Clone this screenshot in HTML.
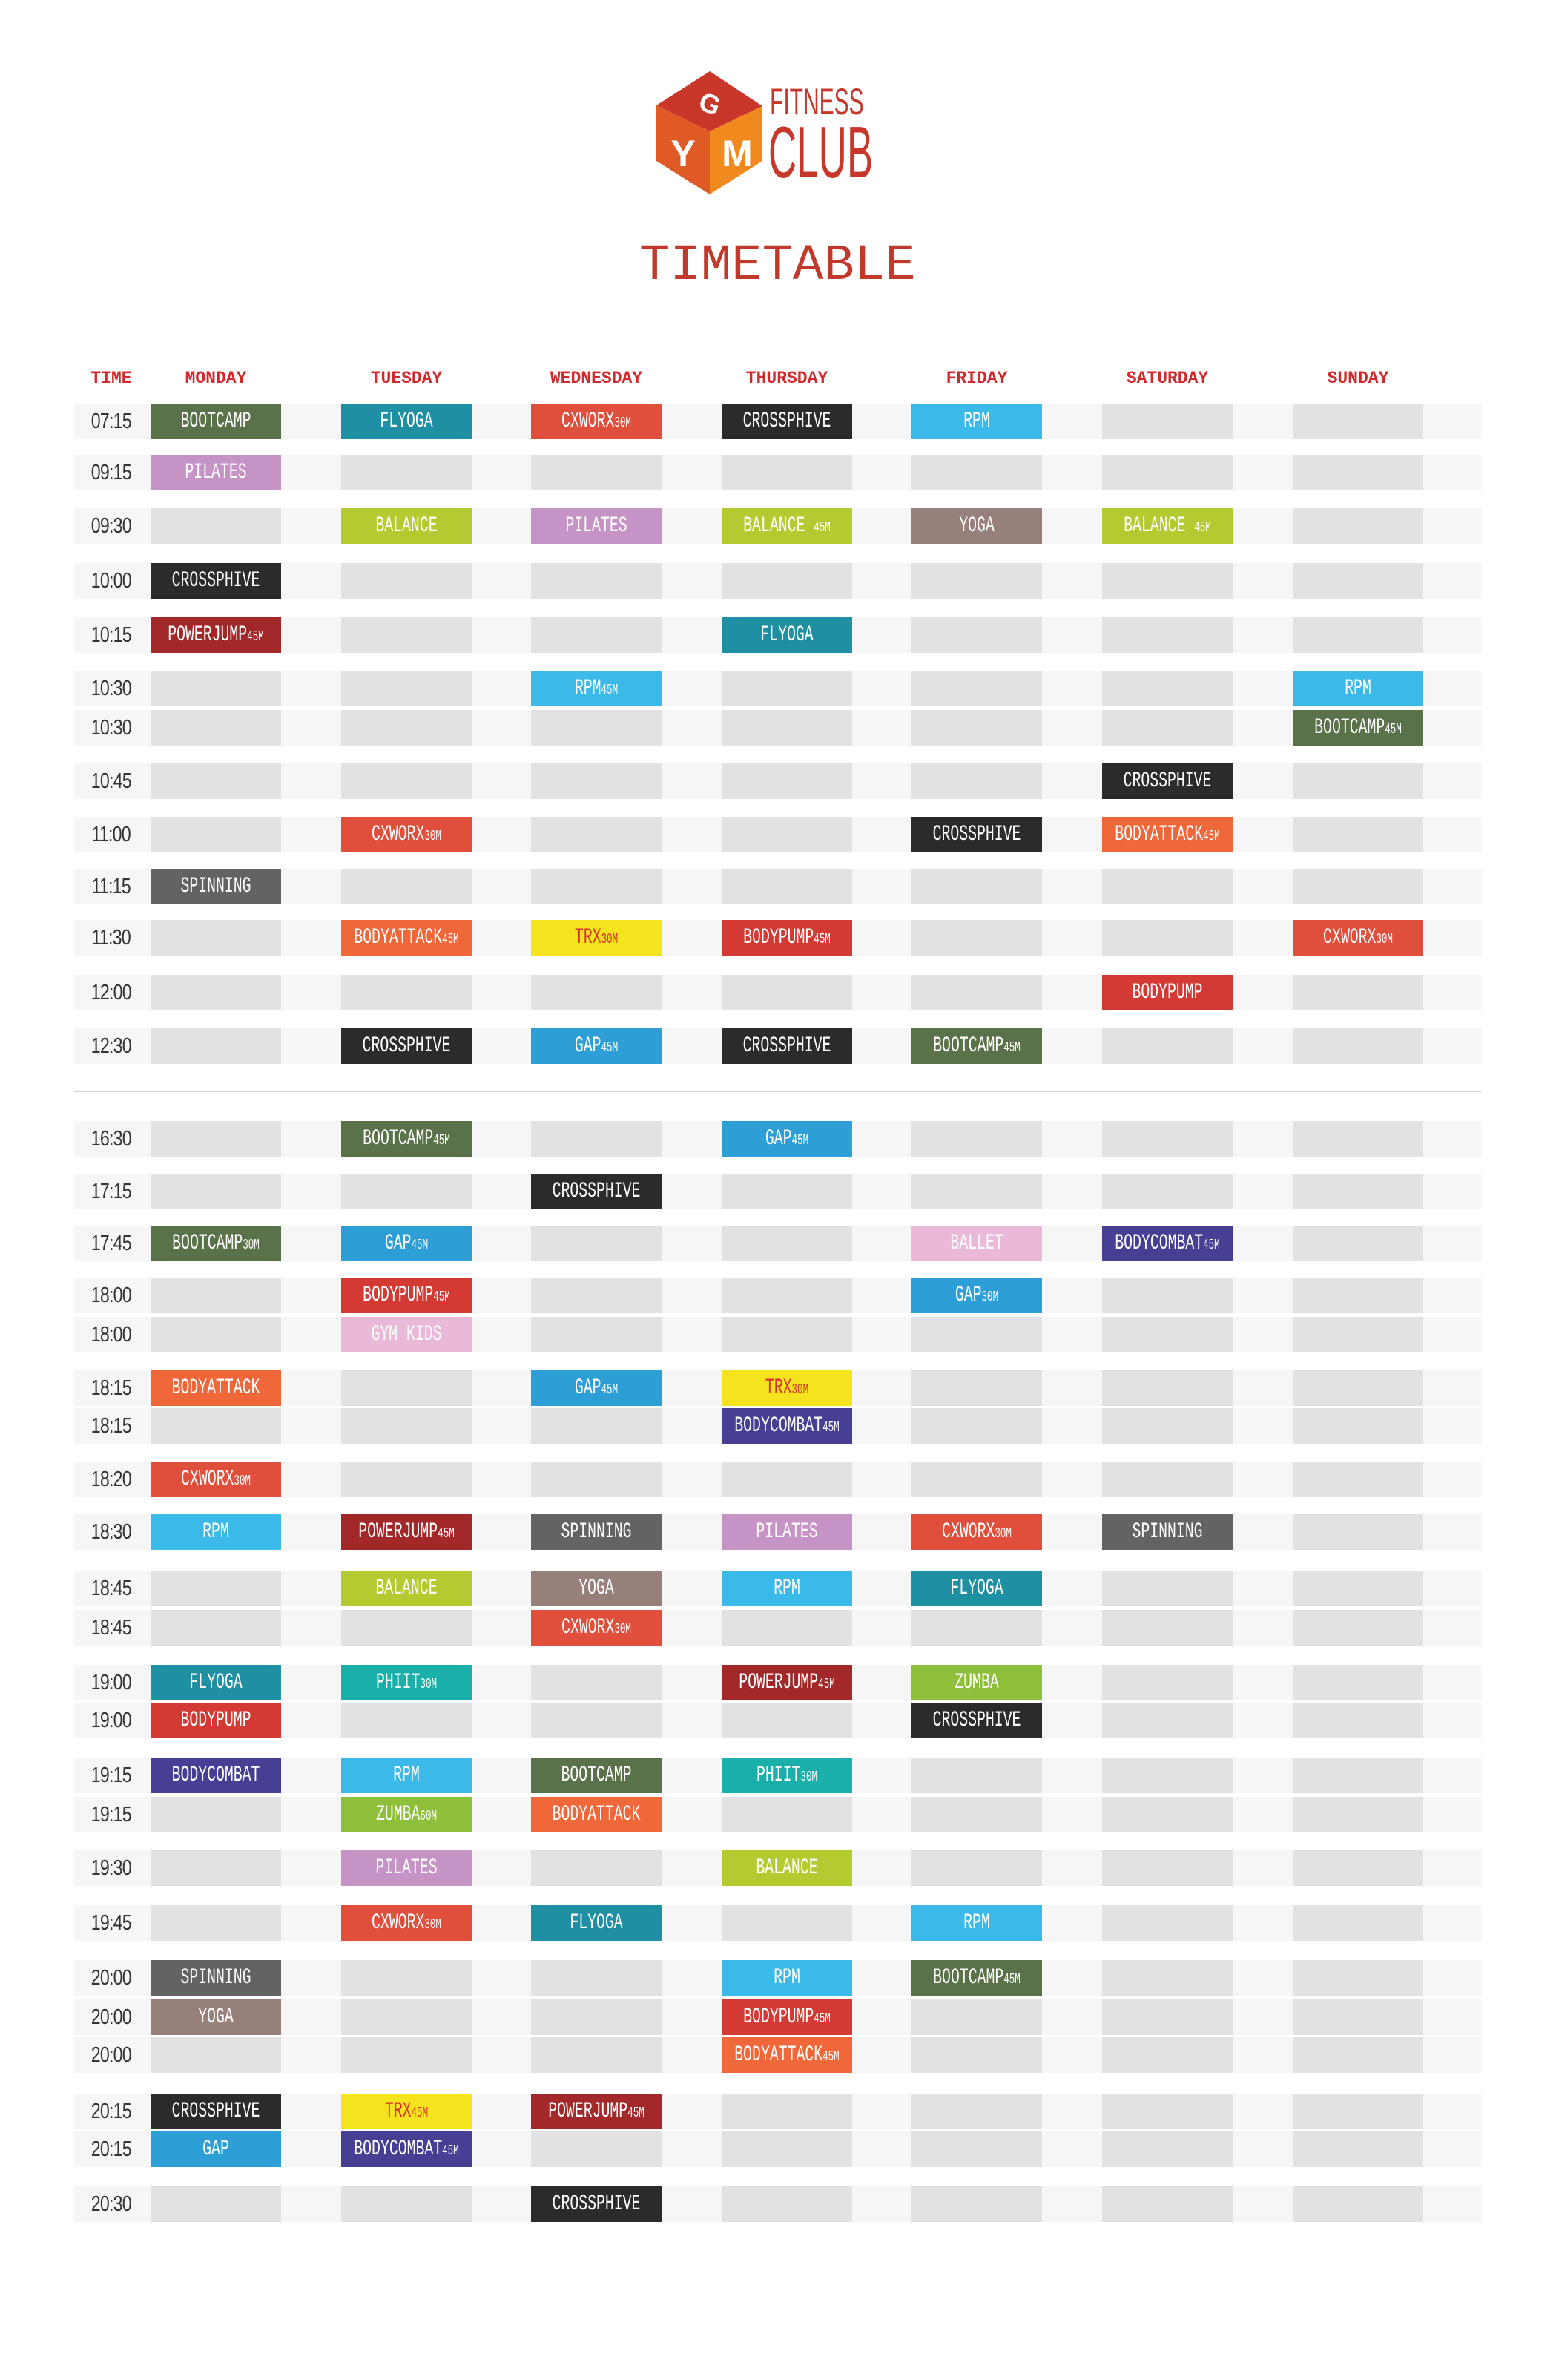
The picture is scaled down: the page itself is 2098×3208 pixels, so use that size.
<!DOCTYPE html>
<html><head><meta charset="utf-8">
<style>
body{margin:0;background:#fff;}
#p{position:relative;width:2098px;height:3208px;overflow:hidden;background:#fff;font-family:"Liberation Sans",sans-serif;}
.h{position:absolute;top:497px;font:bold 23px "Liberation Mono",monospace;color:#d3282c;width:176px;text-align:center;}
.r{position:absolute;left:100px;width:1898px;height:48px;background:#f6f6f6;}
.t{position:absolute;left:0;top:0;width:100px;height:48px;line-height:48px;text-align:center;font-size:29px;color:#333;font-weight:300;}
.t span{display:inline-block;transform:scaleX(.8);letter-spacing:-1px;}
.c{position:absolute;top:0;width:176px;height:48px;line-height:48px;color:#fff;font-family:"Liberation Mono",monospace;font-size:30px;white-space:nowrap;overflow:hidden;background:#e2e2e4;}
.c span{position:absolute;left:50%;top:0;transform:translateX(-50%) scaleX(.66);}
.c small{font-size:19px;}
.d1{left:103px}.d2{left:360px}.d3{left:616px}.d4{left:873px}.d5{left:1129px}.d6{left:1386px}.d7{left:1643px}
.BC{background:#5a7249}.FY{background:#1f8fa3}.CX{background:#e04e3c}.CR{background:#2b2b2b}.RP{background:#3bb9e8}
.PI{background:#c693c6}.BA{background:#b5c930}.YO{background:#978079}.PJ{background:#a3282a}.SP{background:#636363}
.AT{background:#f0673a}.TR{background:#f5e31e;color:#d6322a!important}.BP{background:#d43a34}.GA{background:#2e9fd6}
.CB{background:#463f94}.BL{background:#eab9d8}.PH{background:#1ab0a9}.ZU{background:#8dbf3a}
</style></head><body><div id="p">

<svg style="position:absolute;left:880px;top:90px" width="160" height="180" viewBox="880 90 160 180">
<polygon points="957,96 1028,143 957,177 885,142" fill="#c8372a"/>
<polygon points="885,142 957,177 957,262 885,217" fill="#e05a25"/>
<polygon points="957,177 1028,143 1028,217 957,262" fill="#f08a1e"/>
<text x="957" y="152" font-family="Liberation Sans" font-weight="bold" font-size="36" fill="#fff" text-anchor="middle" transform="rotate(20 957 140)">G</text>
<text x="921" y="224" font-family="Liberation Sans" font-weight="bold" font-size="50" fill="#fff" text-anchor="middle">Y</text>
<text x="994" y="224" font-family="Liberation Sans" font-weight="bold" font-size="50" fill="#fff" text-anchor="middle">M</text>
</svg>
<div style="position:absolute;left:1038px;top:112px;font-size:50px;color:#c8372a;line-height:50px;transform:scaleX(.6);transform-origin:left top;">FITNESS</div>
<div style="position:absolute;left:1036px;top:156px;font-size:98px;color:#c8372a;line-height:98px;transform:scaleX(.54);transform-origin:left top;">CLUB</div>
<div style="position:absolute;left:862px;top:318px;font:69px 'Liberation Mono',monospace;color:#c0392b;line-height:80px;">TIMETABLE</div>

<div class="h" style="left:62px">TIME</div>
<div class="h" style="left:203px">MONDAY</div>
<div class="h" style="left:460px">TUESDAY</div>
<div class="h" style="left:716px">WEDNESDAY</div>
<div class="h" style="left:973px">THURSDAY</div>
<div class="h" style="left:1229px">FRIDAY</div>
<div class="h" style="left:1486px">SATURDAY</div>
<div class="h" style="left:1743px">SUNDAY</div>

<div class="r" style="top:544px"><div class="t"><span>07:15</span></div><div class="c d1 BC"><span>BOOTCAMP</span></div><div class="c d2 FY"><span>FLYOGA</span></div><div class="c d3 CX"><span>CXWORX<small>30M</small></span></div><div class="c d4 CR"><span>CROSSPHIVE</span></div><div class="c d5 RP"><span>RPM</span></div><div class="c d6"></div><div class="c d7"></div></div>
<div class="r" style="top:613px"><div class="t"><span>09:15</span></div><div class="c d1 PI"><span>PILATES</span></div><div class="c d2"></div><div class="c d3"></div><div class="c d4"></div><div class="c d5"></div><div class="c d6"></div><div class="c d7"></div></div>
<div class="r" style="top:685px"><div class="t"><span>09:30</span></div><div class="c d1"></div><div class="c d2 BA"><span>BALANCE</span></div><div class="c d3 PI"><span>PILATES</span></div><div class="c d4 BA"><span>BALANCE <small>45M</small></span></div><div class="c d5 YO"><span>YOGA</span></div><div class="c d6 BA"><span>BALANCE <small>45M</small></span></div><div class="c d7"></div></div>
<div class="r" style="top:759px"><div class="t"><span>10:00</span></div><div class="c d1 CR"><span>CROSSPHIVE</span></div><div class="c d2"></div><div class="c d3"></div><div class="c d4"></div><div class="c d5"></div><div class="c d6"></div><div class="c d7"></div></div>
<div class="r" style="top:832px"><div class="t"><span>10:15</span></div><div class="c d1 PJ"><span>POWERJUMP<small>45M</small></span></div><div class="c d2"></div><div class="c d3"></div><div class="c d4 FY"><span>FLYOGA</span></div><div class="c d5"></div><div class="c d6"></div><div class="c d7"></div></div>
<div class="r" style="top:904px"><div class="t"><span>10:30</span></div><div class="c d1"></div><div class="c d2"></div><div class="c d3 RP"><span>RPM<small>45M</small></span></div><div class="c d4"></div><div class="c d5"></div><div class="c d6"></div><div class="c d7 RP"><span>RPM</span></div></div>
<div class="r" style="top:957px"><div class="t"><span>10:30</span></div><div class="c d1"></div><div class="c d2"></div><div class="c d3"></div><div class="c d4"></div><div class="c d5"></div><div class="c d6"></div><div class="c d7 BC"><span>BOOTCAMP<small>45M</small></span></div></div>
<div class="r" style="top:1029px"><div class="t"><span>10:45</span></div><div class="c d1"></div><div class="c d2"></div><div class="c d3"></div><div class="c d4"></div><div class="c d5"></div><div class="c d6 CR"><span>CROSSPHIVE</span></div><div class="c d7"></div></div>
<div class="r" style="top:1101px"><div class="t"><span>11:00</span></div><div class="c d1"></div><div class="c d2 CX"><span>CXWORX<small>30M</small></span></div><div class="c d3"></div><div class="c d4"></div><div class="c d5 CR"><span>CROSSPHIVE</span></div><div class="c d6 AT"><span>BODYATTACK<small>45M</small></span></div><div class="c d7"></div></div>
<div class="r" style="top:1171px"><div class="t"><span>11:15</span></div><div class="c d1 SP"><span>SPINNING</span></div><div class="c d2"></div><div class="c d3"></div><div class="c d4"></div><div class="c d5"></div><div class="c d6"></div><div class="c d7"></div></div>
<div class="r" style="top:1240px"><div class="t"><span>11:30</span></div><div class="c d1"></div><div class="c d2 AT"><span>BODYATTACK<small>45M</small></span></div><div class="c d3 TR"><span>TRX<small>30M</small></span></div><div class="c d4 BP"><span>BODYPUMP<small>45M</small></span></div><div class="c d5"></div><div class="c d6"></div><div class="c d7 CX"><span>CXWORX<small>30M</small></span></div></div>
<div class="r" style="top:1314px"><div class="t"><span>12:00</span></div><div class="c d1"></div><div class="c d2"></div><div class="c d3"></div><div class="c d4"></div><div class="c d5"></div><div class="c d6 BP"><span>BODYPUMP</span></div><div class="c d7"></div></div>
<div class="r" style="top:1386px"><div class="t"><span>12:30</span></div><div class="c d1"></div><div class="c d2 CR"><span>CROSSPHIVE</span></div><div class="c d3 GA"><span>GAP<small>45M</small></span></div><div class="c d4 CR"><span>CROSSPHIVE</span></div><div class="c d5 BC"><span>BOOTCAMP<small>45M</small></span></div><div class="c d6"></div><div class="c d7"></div></div>

<div style="position:absolute;left:100px;top:1470px;width:1898px;height:2px;background:#cfcfcf"></div>

<div class="r" style="top:1511px"><div class="t"><span>16:30</span></div><div class="c d1"></div><div class="c d2 BC"><span>BOOTCAMP<small>45M</small></span></div><div class="c d3"></div><div class="c d4 GA"><span>GAP<small>45M</small></span></div><div class="c d5"></div><div class="c d6"></div><div class="c d7"></div></div>
<div class="r" style="top:1582px"><div class="t"><span>17:15</span></div><div class="c d1"></div><div class="c d2"></div><div class="c d3 CR"><span>CROSSPHIVE</span></div><div class="c d4"></div><div class="c d5"></div><div class="c d6"></div><div class="c d7"></div></div>
<div class="r" style="top:1652px"><div class="t"><span>17:45</span></div><div class="c d1 BC"><span>BOOTCAMP<small>30M</small></span></div><div class="c d2 GA"><span>GAP<small>45M</small></span></div><div class="c d3"></div><div class="c d4"></div><div class="c d5 BL"><span>BALLET</span></div><div class="c d6 CB"><span>BODYCOMBAT<small>45M</small></span></div><div class="c d7"></div></div>
<div class="r" style="top:1722px"><div class="t"><span>18:00</span></div><div class="c d1"></div><div class="c d2 BP"><span>BODYPUMP<small>45M</small></span></div><div class="c d3"></div><div class="c d4"></div><div class="c d5 GA"><span>GAP<small>30M</small></span></div><div class="c d6"></div><div class="c d7"></div></div>
<div class="r" style="top:1775px"><div class="t"><span>18:00</span></div><div class="c d1"></div><div class="c d2 BL"><span>GYM KIDS</span></div><div class="c d3"></div><div class="c d4"></div><div class="c d5"></div><div class="c d6"></div><div class="c d7"></div></div>
<div class="r" style="top:1847px"><div class="t"><span>18:15</span></div><div class="c d1 AT"><span>BODYATTACK</span></div><div class="c d2"></div><div class="c d3 GA"><span>GAP<small>45M</small></span></div><div class="c d4 TR"><span>TRX<small>30M</small></span></div><div class="c d5"></div><div class="c d6"></div><div class="c d7"></div></div>
<div class="r" style="top:1898px"><div class="t"><span>18:15</span></div><div class="c d1"></div><div class="c d2"></div><div class="c d3"></div><div class="c d4 CB"><span>BODYCOMBAT<small>45M</small></span></div><div class="c d5"></div><div class="c d6"></div><div class="c d7"></div></div>
<div class="r" style="top:1970px"><div class="t"><span>18:20</span></div><div class="c d1 CX"><span>CXWORX<small>30M</small></span></div><div class="c d2"></div><div class="c d3"></div><div class="c d4"></div><div class="c d5"></div><div class="c d6"></div><div class="c d7"></div></div>
<div class="r" style="top:2041px"><div class="t"><span>18:30</span></div><div class="c d1 RP"><span>RPM</span></div><div class="c d2 PJ"><span>POWERJUMP<small>45M</small></span></div><div class="c d3 SP"><span>SPINNING</span></div><div class="c d4 PI"><span>PILATES</span></div><div class="c d5 CX"><span>CXWORX<small>30M</small></span></div><div class="c d6 SP"><span>SPINNING</span></div><div class="c d7"></div></div>
<div class="r" style="top:2117px"><div class="t"><span>18:45</span></div><div class="c d1"></div><div class="c d2 BA"><span>BALANCE</span></div><div class="c d3 YO"><span>YOGA</span></div><div class="c d4 RP"><span>RPM</span></div><div class="c d5 FY"><span>FLYOGA</span></div><div class="c d6"></div><div class="c d7"></div></div>
<div class="r" style="top:2170px"><div class="t"><span>18:45</span></div><div class="c d1"></div><div class="c d2"></div><div class="c d3 CX"><span>CXWORX<small>30M</small></span></div><div class="c d4"></div><div class="c d5"></div><div class="c d6"></div><div class="c d7"></div></div>
<div class="r" style="top:2244px"><div class="t"><span>19:00</span></div><div class="c d1 FY"><span>FLYOGA</span></div><div class="c d2 PH"><span>PHIIT<small>30M</small></span></div><div class="c d3"></div><div class="c d4 PJ"><span>POWERJUMP<small>45M</small></span></div><div class="c d5 ZU"><span>ZUMBA</span></div><div class="c d6"></div><div class="c d7"></div></div>
<div class="r" style="top:2295px"><div class="t"><span>19:00</span></div><div class="c d1 BP"><span>BODYPUMP</span></div><div class="c d2"></div><div class="c d3"></div><div class="c d4"></div><div class="c d5 CR"><span>CROSSPHIVE</span></div><div class="c d6"></div><div class="c d7"></div></div>
<div class="r" style="top:2369px"><div class="t"><span>19:15</span></div><div class="c d1 CB"><span>BODYCOMBAT</span></div><div class="c d2 RP"><span>RPM</span></div><div class="c d3 BC"><span>BOOTCAMP</span></div><div class="c d4 PH"><span>PHIIT<small>30M</small></span></div><div class="c d5"></div><div class="c d6"></div><div class="c d7"></div></div>
<div class="r" style="top:2422px"><div class="t"><span>19:15</span></div><div class="c d1"></div><div class="c d2 ZU"><span>ZUMBA<small>60M</small></span></div><div class="c d3 AT"><span>BODYATTACK</span></div><div class="c d4"></div><div class="c d5"></div><div class="c d6"></div><div class="c d7"></div></div>
<div class="r" style="top:2494px"><div class="t"><span>19:30</span></div><div class="c d1"></div><div class="c d2 PI"><span>PILATES</span></div><div class="c d3"></div><div class="c d4 BA"><span>BALANCE</span></div><div class="c d5"></div><div class="c d6"></div><div class="c d7"></div></div>
<div class="r" style="top:2568px"><div class="t"><span>19:45</span></div><div class="c d1"></div><div class="c d2 CX"><span>CXWORX<small>30M</small></span></div><div class="c d3 FY"><span>FLYOGA</span></div><div class="c d4"></div><div class="c d5 RP"><span>RPM</span></div><div class="c d6"></div><div class="c d7"></div></div>
<div class="r" style="top:2642px"><div class="t"><span>20:00</span></div><div class="c d1 SP"><span>SPINNING</span></div><div class="c d2"></div><div class="c d3"></div><div class="c d4 RP"><span>RPM</span></div><div class="c d5 BC"><span>BOOTCAMP<small>45M</small></span></div><div class="c d6"></div><div class="c d7"></div></div>
<div class="r" style="top:2695px"><div class="t"><span>20:00</span></div><div class="c d1 YO"><span>YOGA</span></div><div class="c d2"></div><div class="c d3"></div><div class="c d4 BP"><span>BODYPUMP<small>45M</small></span></div><div class="c d5"></div><div class="c d6"></div><div class="c d7"></div></div>
<div class="r" style="top:2746px"><div class="t"><span>20:00</span></div><div class="c d1"></div><div class="c d2"></div><div class="c d3"></div><div class="c d4 AT"><span>BODYATTACK<small>45M</small></span></div><div class="c d5"></div><div class="c d6"></div><div class="c d7"></div></div>
<div class="r" style="top:2822px"><div class="t"><span>20:15</span></div><div class="c d1 CR"><span>CROSSPHIVE</span></div><div class="c d2 TR"><span>TRX<small>45M</small></span></div><div class="c d3 PJ"><span>POWERJUMP<small>45M</small></span></div><div class="c d4"></div><div class="c d5"></div><div class="c d6"></div><div class="c d7"></div></div>
<div class="r" style="top:2873px"><div class="t"><span>20:15</span></div><div class="c d1 GA"><span>GAP</span></div><div class="c d2 CB"><span>BODYCOMBAT<small>45M</small></span></div><div class="c d3"></div><div class="c d4"></div><div class="c d5"></div><div class="c d6"></div><div class="c d7"></div></div>
<div class="r" style="top:2947px"><div class="t"><span>20:30</span></div><div class="c d1"></div><div class="c d2"></div><div class="c d3 CR"><span>CROSSPHIVE</span></div><div class="c d4"></div><div class="c d5"></div><div class="c d6"></div><div class="c d7"></div></div>

</div></body></html>
